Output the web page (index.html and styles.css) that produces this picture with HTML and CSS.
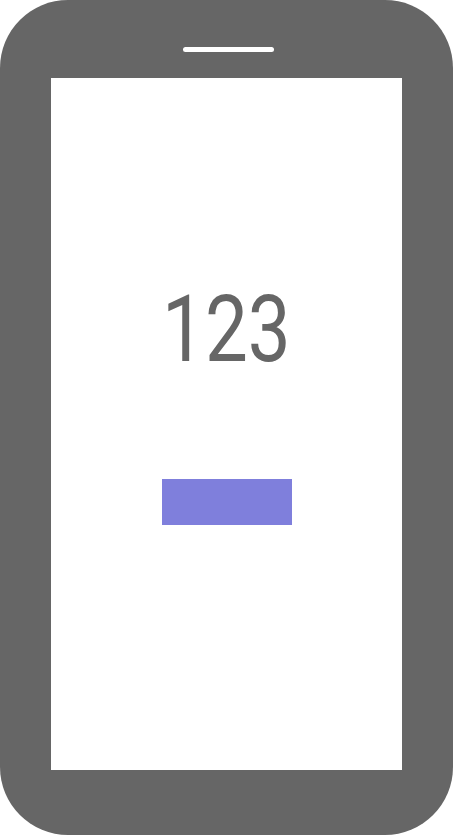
FILE: index.html
```html
<!DOCTYPE html>
<html>
<head>
<meta charset="utf-8">
<link rel="stylesheet" href="styles.css">
</head>
<body>
<div class="phone">
  <div class="speaker"></div>
  <div class="screen">
    <div class="count"><span class="count-text">123</span></div>
    <div class="button"></div>
  </div>
</div>
</body>
</html>
```
FILE: styles.css
```css
html, body {
  margin: 0;
  padding: 0;
  background: #ffffff;
}
.phone {
  width: 453px;
  height: 835px;
  background: #666666;
  border-radius: 68px;
  display: flex;
  flex-direction: column;
  align-items: flex-start;
  box-sizing: border-box;
  padding-top: 47px;
}
.speaker {
  width: 91px;
  height: 5px;
  background: #ffffff;
  border-radius: 3px;
  margin-left: 183px;
}
.screen {
  margin-top: 26px;
  margin-left: 51px;
  width: 351px;
  height: 692px;
  background: #ffffff;
  display: flex;
  flex-direction: column;
  align-items: center;
  box-sizing: border-box;
  padding-top: 205px;
}
.count {
  font-family: Roboto, "Liberation Sans", sans-serif;
  font-size: 93px;
  line-height: 93px;
  height: 93px;
  color: #666666;
  text-align: center;
}
.count-text {
  display: inline-block;
  transform: scaleX(0.82);
}
.button {
  margin-top: 103px;
  width: 130px;
  height: 46px;
  background: #7f7fdc;
}
```
